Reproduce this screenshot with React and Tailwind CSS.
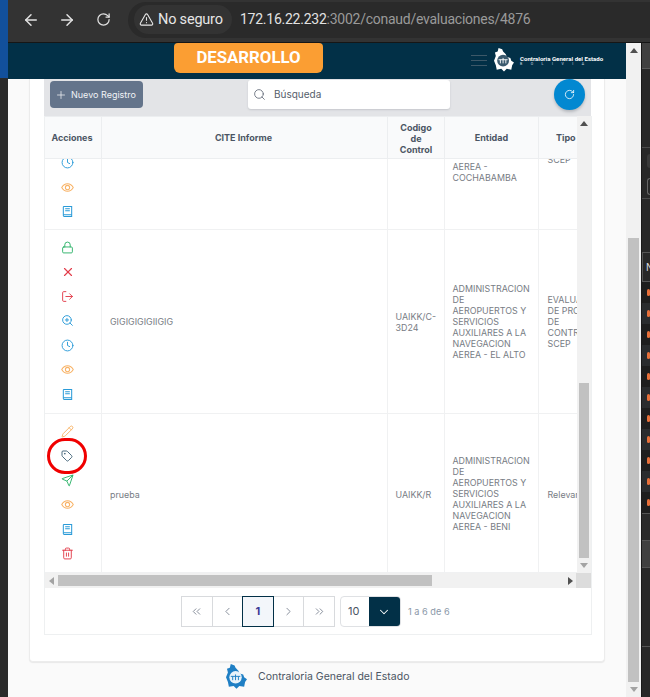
import React from "react";
import { ArrowLeft, ArrowRight, RotateCw, TriangleAlert, Plus, Search, Lock, X, LogOut, ZoomIn, Clock, Pencil, Tag, Send, Trash2, ChevronsLeft, ChevronLeft, ChevronRight, ChevronsRight, ChevronDown } from "lucide-react";

const Book = ({ className }) => (
  <svg viewBox="0 0 14 14" width="13" height="13" fill="none" stroke="currentColor" strokeWidth="1.1" className={className}>
    <path d="M3 1.500h8.500v11H3.500A1.200 1.200 0 0 1 2.500 11.300V2.200A.8.8 0 0 1 3 1.500Z" />
    <path d="M2.500 10.500h9M4.500 4h5M4.500 6.300h5" />
  </svg>
);

const EyeRing = ({ className }) => (
  <svg viewBox="0 0 14 14" width="13" height="13" fill="none" stroke="currentColor" strokeWidth="1.1" className={className}>
    <path d="M.8 7C2.300 4.200 4.400 2.900 7 2.900s4.700 1.300 6.200 4.100C11.700 9.800 9.600 11.100 7 11.100S2.300 9.800.8 7Z" />
    <circle cx="7" cy="7" r="2.300" />
  </svg>
);

const Bolivia = ({ fill, seal, size }) => (
  <svg viewBox="0 0 22 28" width={size} height={size * 28 / 22}>
    <path d="M5 1 9 2.500 10 5 13 8 14 11 18 12 19 15 22 17 20 20 19 25 14 24 11 27 8 24 3 25 2 20 0 15 2 10 1 6 4 5Z" fill={fill} />
    <circle cx="10" cy="15" r="6.500" fill={seal} />
    <path d="M5 14h10M7 14v4M10 12v6M13 14v4" stroke={fill} strokeWidth="1" fill="none" />
  </svg>
);

const ico = "shrink-0";
const sw = 1.75;
const I = {
  lock: <Lock size={13} strokeWidth={sw} className={`${ico} text-[#2fb36a]`} />,
  x: <X size={14} strokeWidth={2} className={`${ico} text-[#e23d4b]`} />,
  out: <LogOut size={13} strokeWidth={sw} className={`${ico} text-[#e23d4b]`} />,
  zoom: <ZoomIn size={13} strokeWidth={sw} className={`${ico} text-[#2a9bd8]`} />,
  clock: <Clock size={13} strokeWidth={sw} className={`${ico} text-[#2a9bd8]`} />,
  eye: <EyeRing className={`${ico} text-[#f8b367]`} />,
  book: <Book className={`${ico} text-[#2a9bd8]`} />,
  pencil: <Pencil size={13} strokeWidth={sw} className={`${ico} text-[#f8b367]`} />,
  tag: <Tag size={12} strokeWidth={sw} className={`${ico} text-[#34586e]`} />,
  send: <Send size={13} strokeWidth={sw} className={`${ico} text-[#2fb36a]`} />,
  trash: <Trash2 size={13} strokeWidth={sw} className={`${ico} text-[#e23d4b]`} />,
};

const Icons = ({ list }) => list.map((k, i) => (
  <div key={i} className="h-[24.5px] flex items-center justify-start pl-[16px] shrink-0">{I[k]}</div>
));

const Tri = ({ cls }) => <span className={`block w-0 h-0 ${cls}`} />;

const Cell = ({ className = "", children }) => (
  <div className={`border-r border-b border-[#f0f1f2] overflow-hidden min-w-0 flex flex-col ${className}`}>{children}</div>
);

const H = ({ children, className = "" }) => (
  <div className={`h-[43px] bg-[#f9fafb] border-r border-b border-[#eceef0] border-t flex items-center justify-center text-center font-bold text-[9px] leading-[11px] text-[#4b5563] overflow-hidden ${className}`}>{children}</div>
);

const PageBtn = ({ children, active }) => (
  <div className={`w-[31.600px] h-[31px] -ml-px first:ml-0 flex items-center justify-center border ${active ? "relative border-[#023047] bg-[#f3f6fa] text-[#3d3a96] font-bold text-[11px]" : "border-[#d8dadd] text-[#6f7886]"}`}>{children}</div>
);

const strip = ["bg-[#1e1e1e]", "bg-[#2a2c2e]"];

export default function App() {
  return (
    <div className="w-[650px] h-[697px] flex overflow-hidden bg-[#282828] [font-family:Inter,sans-serif]">
      <div className="w-[8px] shrink-0 flex flex-col">
        <div className="h-[78px] bg-[#12509c]" />
        <div className="flex-1 bg-[#2b2b2b]" />
      </div>
      <div className="flex-1 min-w-0 flex flex-col">
        <div className="h-[43px] shrink-0 bg-[#333333] border-b border-[#161616] flex items-center pb-[3px] [font-family:Roboto,sans-serif]">
          <ArrowLeft size={18} strokeWidth={2} className="ml-[14px] text-[#e2e2e2]" />
          <ArrowRight size={18} strokeWidth={2} className="ml-[18px] text-[#e2e2e2]" />
          <RotateCw size={15} strokeWidth={2} className="ml-[20px] text-[#e2e2e2]" />
          <div className="ml-[17px] flex-1 h-[36px] bg-[#2a2a2a] rounded-l-full flex items-center pl-[6px]">
            <div className="h-[29px] w-[98px] bg-[#333333] rounded-full flex items-center pl-[5px] gap-[4px] text-[#e6e6e6] text-[14.500px] tracking-[-0.2px] whitespace-nowrap">
              <TriangleAlert size={15} strokeWidth={1.75} />
              <span>No seguro</span>
            </div>
            <span className="ml-[8px] text-[14px] tracking-[-0.25px] text-[#e2e2e2] whitespace-nowrap">172.16.22.232<span className="text-[#9a9a9a]">:3002/conaud/evaluaciones/4876</span></span>
          </div>
        </div>
        <div className="flex-1 min-h-0 flex">
          <div className="w-[618px] shrink-0 flex flex-col bg-[#fafafa]">
            <div className="h-[36px] shrink-0 bg-[#023047] flex items-start">
              <div className="ml-[166px] w-[149px] h-[30px] rounded-b-[6px] rounded-t-[4px] bg-[#fb9e33] text-white font-bold text-[16.800px] [font-family:Roboto,sans-serif] flex items-center justify-center">DESARROLLO</div>
              <div className="ml-[148px] mt-[12px] w-[16px] flex flex-col gap-[4px]">
                <div className="h-px bg-[#3d5868]" /><div className="h-px bg-[#3d5868]" /><div className="h-px bg-[#3d5868]" />
              </div>
              <div className="ml-[7px] mt-[4px]"><Bolivia fill="#ffffff" seal="#3b5a6e" size={20} /></div>
              <div className="ml-[6px] mt-[12px] text-white [font-family:Roboto,sans-serif]">
                <div className="text-[6.100px] leading-[7px] font-bold whitespace-nowrap">Contraloria General del Estado</div>
                <div className="text-[3.500px] leading-[4px] tracking-[8.500px] whitespace-nowrap text-[#d5dde2]">BOLIVIA</div>
              </div>
            </div>
            <div className="flex-1 min-h-0 pl-[21px]">
              <div className="w-[576px] h-[583px] bg-white border-x border-b border-[#ececec] rounded-b-[4px] pl-[14px] pr-[13px] shadow-[0_1px_1px_#e8e8e8]">
                <div className="h-[37px] bg-[#e3e4e7] flex items-start">
                  <div className="ml-[6px] mt-[2px] w-[93px] h-[27px] rounded-[4px] bg-[#64748b] text-[#f1f3f6] text-[9px] flex items-center pl-[5px] gap-[4px] whitespace-nowrap">
                    <Plus size={12} strokeWidth={1.5} /><span>Nuevo Registro</span>
                  </div>
                  <div className="ml-[105px] mt-[1px] w-[202px] h-[29px] rounded-[3px] bg-white shadow-[0_1px_2px_#c5c7cc] flex items-center pl-[5px] gap-[8px] text-[10px] text-[#555e6b]">
                    <Search size={13} strokeWidth={1.5} className="text-[#5b6472]" /><span>Búsqueda</span>
                  </div>
                  <div className="ml-auto mr-[6px] w-[31px] h-[31px] rounded-full bg-[#0288d1] shadow-[0_2px_3px_#b5b8bd] flex items-center justify-center text-white">
                    <RotateCw size={11} strokeWidth={1.75} />
                  </div>
                </div>
                <div className="border-x border-b border-[#eef0f1] h-[519px] flex flex-col -mx-px ml-0">
                  <div className="h-[472px] shrink-0 flex flex-col">
                    <div className="h-[457px] flex">
                      <div className="w-[532px] shrink-0 grid grid-cols-[57px_286px_57px_94px_38px] grid-rows-[43px_71px_184px_159px] text-[8.900px] leading-[11px] text-[#777c84]">
                        <H className="pr-[2px]">Acciones</H><H className="pr-[2px]">CITE Informe</H><H className="pt-[1px]">Codigo<br />de<br />Control</H><H>Entidad</H>
                        <H className="border-r-0 justify-start pl-[17px]">Tipo</H>

                        <Cell className="justify-end pb-[5px]"><Icons list={["clock", "eye", "book"]} /></Cell>
                        <Cell />
                        <Cell />
                        <Cell className="justify-end pb-[46px] pl-[7.500px]"><div>AEREA -</div><div>COCHABAMBA</div></Cell>
                        <Cell className="justify-end pb-[64px] pl-[8.500px] border-r-0"><div>SCEP</div></Cell>

                        <Cell className="justify-center pb-[2px]"><Icons list={["lock", "x", "out", "zoom", "clock", "eye", "book"]} /></Cell>
                        <Cell className="justify-center pl-[8px]">GIGIGIGIGIIGIG</Cell>
                        <Cell className="justify-center pl-[7.500px]">UAIKK/C-<br />3D24</Cell>
                        <Cell className="justify-center pl-[7.500px] whitespace-nowrap">ADMINISTRACION<br />DE<br />AEROPUERTOS Y<br />SERVICIOS<br />AUXILIARES A LA<br />NAVEGACION<br />AEREA - EL ALTO</Cell>
                        <Cell className="justify-center pl-[8.500px] whitespace-nowrap border-r-0">EVALUACION<br />DE PROCESO<br />DE<br />CONTROL<br />SCEP</Cell>

                        <Cell className="justify-center relative !overflow-visible pb-[1px]">
                          <Icons list={["pencil", "tag", "send", "eye", "book", "trash"]} />
                          <div className="absolute left-[2px] top-[24px] w-[40px] h-[36px] rounded-full border-[3px] border-[#f00000]" />
                        </Cell>
                        <Cell className="justify-center pl-[8px] pt-[2px]">prueba</Cell>
                        <Cell className="justify-center pl-[7.500px] pt-[2px]">UAIKK/R</Cell>
                        <Cell className="justify-center pl-[7.500px] whitespace-nowrap pt-[1px]">ADMINISTRACION<br />DE<br />AEROPUERTOS Y<br />SERVICIOS<br />AUXILIARES A LA<br />NAVEGACION<br />AEREA - BENI</Cell>
                        <Cell className="justify-center pl-[8.500px] whitespace-nowrap border-r-0 pt-[2px]">Relevamiento</Cell>
                      </div>
                      <div className="flex-1 bg-[#f1f1f1] flex flex-col items-center">
                        <div className="h-[15px] flex items-center justify-center shrink-0"><Tri cls="border-x-[4px] border-x-transparent border-b-[5px] border-b-[#505050]" /></div>
                        <div className="flex-1 w-full px-[2px] pt-[252px]"><div className="h-[175px] bg-[#c1c1c1]" /></div>
                        <div className="h-[15px] flex items-center justify-center shrink-0"><Tri cls="border-x-[4px] border-x-transparent border-t-[5px] border-t-[#a3a3a3]" /></div>
                      </div>
                    </div>
                    <div className="h-[15px] flex bg-[#f1f1f1] items-center">
                      <div className="w-[13px] flex justify-center"><Tri cls="border-y-[4px] border-y-transparent border-r-[5px] border-r-[#a3a3a3]" /></div>
                      <div className="w-[374px] h-[11px] bg-[#c1c1c1]" />
                      <div className="flex-1 flex justify-end pr-[3px]"><Tri cls="border-y-[4px] border-y-transparent border-l-[5px] border-l-[#505050]" /></div>
                      <div className="w-[15px] h-[15px] bg-[#dcdcdc]" />
                    </div>
                  </div>
                  <div className="pt-[8px] pl-[136px] flex items-start">
                    <div className="flex">
                      <PageBtn><ChevronsLeft size={13} strokeWidth={1.5} /></PageBtn>
                      <PageBtn><ChevronLeft size={13} strokeWidth={1.5} /></PageBtn>
                      <PageBtn active>1</PageBtn>
                      <PageBtn><ChevronRight size={13} strokeWidth={1.5} /></PageBtn>
                      <PageBtn><ChevronsRight size={13} strokeWidth={1.5} /></PageBtn>
                    </div>
                    <div className="ml-[5px] w-[61px] h-[31px] rounded-[4px] border border-[#dfe1e4] flex overflow-hidden">
                      <div className="flex-1 flex items-center pl-[7px] text-[11px] text-[#4b5563]">10</div>
                      <div className="w-[31px] bg-[#023047] flex items-center justify-center text-white"><ChevronDown size={14} strokeWidth={1.75} /></div>
                    </div>
                    <div className="ml-[7px] h-[31px] flex items-center text-[9.200px] text-[#8a97a8] whitespace-nowrap">1 a 6 de 6</div>
                  </div>
                </div>
              </div>
              <div className="h-[35px] flex items-center pl-[197px] gap-[11px] pb-[6px] text-[10.500px] text-[#4b5563] whitespace-nowrap">
                <Bolivia fill="#1f7fc4" seal="#e9f3fa" size={21} />
                <span>Contraloria General del Estado</span>
              </div>
            </div>
          </div>
          <div className="w-[15px] shrink-0 bg-[#f1f1f1] flex flex-col items-center">
            <div className="h-[15px] flex items-center shrink-0"><Tri cls="border-x-[4px] border-x-transparent border-b-[5px] border-b-[#505050]" /></div>
            <div className="flex-1 w-full px-[2px] pt-[180px]"><div className="h-[444px] bg-[#c1c1c1]" /></div>
            <div className="h-[15px] flex items-center shrink-0"><Tri cls="border-x-[4px] border-x-transparent border-t-[5px] border-t-[#a3a3a3]" /></div>
          </div>
          <div className="flex-1 min-w-0 flex flex-col overflow-hidden border-l border-[#1a1a1a]">
            <div className="h-[26px] bg-[#404040] border-b border-[#5a5a5a] shrink-0" />
            <div className="h-[79px] bg-[#282828] border-b border-[#4a4a4a] shrink-0" />
            <div className="h-[51px] bg-[#282828] border-b border-[#4a4a4a] shrink-0 pl-[5px] pt-[6px] flex flex-col gap-[10px]">
              <div className="h-[14px] bg-[#3a3a3a] rounded-l-full" />
              <div className="h-[17px] border border-r-0 border-[#666] rounded-l-[4px]" />
            </div>
            <div className="h-[53px] bg-[#282828] shrink-0" />
            <div className="h-[30px] bg-[#282828] border border-r-0 border-[#555] shrink-0 text-[#ddd] text-[10px] pl-[3px] leading-[28px]">N</div>
            {[0, 1, 2, 3, 4, 5, 6, 7, 8, 9, 10].map((i) => (
              <div key={i} className={`h-[21px] shrink-0 flex items-center ${strip[i % 2]}`}>
                <span className="block ml-[5px] w-[5px] h-[7px] rounded-full bg-[#e8703a]" />
              </div>
            ))}
            <div className="h-[27px] bg-[#2a2a2a] border-t border-[#555] shrink-0" />
            <div className="h-[27px] bg-[#404040] border-t border-[#555] shrink-0" />
            <div className="h-[79px] bg-[#282828] border-t border-[#555] shrink-0" />
            <div className="flex-1 bg-[#282828] border-t border-[#555]" />
          </div>
        </div>
      </div>
    </div>
  );
}
